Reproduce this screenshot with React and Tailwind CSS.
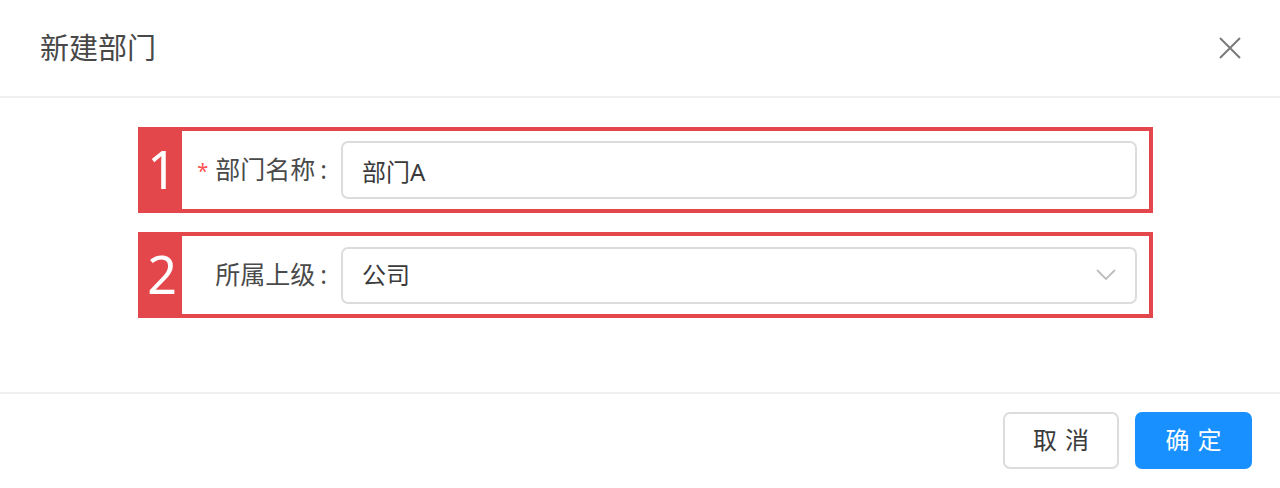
import { useState } from "react";

const font = { fontFamily: '"Noto Sans", "Noto Sans CJK SC", sans-serif' };

function FormRow({ num, required, label, children }) {
    return (
        <div className="ml-[138px] w-[1015px] h-[86px] border-[4px] border-[#e4474b] flex">
            <div className="w-[40px] bg-[#e4474b] flex items-center justify-center text-white text-[52px] leading-none pb-[2px]">
                {num}
            </div>
            <div className="flex-1 flex items-center bg-white">
                <div className="w-[151px] shrink-0 flex items-center justify-end text-[25px] text-[#4a4a4a]">
                    {required && <span className="text-[#ff4d4f] text-[20px] mr-[7px] mt-[2px]">*</span>}
                    <span>{label}</span>
                    <span className="ml-[5px] mr-[6px]">:</span>
                </div>
                <div className="ml-[8px] mr-[12px] flex-1">{children}</div>
            </div>
        </div>
    );
}

export default function App() {
    const [name, setName] = useState('部门A');

    return (
        <div className="w-[1280px] h-[488px] bg-white flex flex-col" style={font}>
            {/* 头部 */}
            <div className="h-[98px] border-b-2 border-[#efefef] flex items-center justify-between pl-[40px] pr-[38px] shrink-0">
                <h1 className="text-[29px] text-[#484848] font-normal">新建部门</h1>
                <svg width="24" height="24" viewBox="0 0 24 24" className="text-[#7a7a7a]">
                    <path d="M2 2 L22 22 M22 2 L2 22" stroke="currentColor" strokeWidth="2" fill="none" />
                </svg>
            </div>

            {/* 表单 */}
            <div className="flex-1 pt-[29px] flex flex-col gap-[19px]">
                <FormRow num="1" required label="部门名称">
                    <input
                        value={name}
                        onChange={(e) => setName(e.target.value)}
                        className="w-full h-[58px] border-2 border-[#dcdcdc] rounded-[7px] px-[19px] text-[24px] text-[#3a3a3a] outline-none"
                        style={font}
                    />
                </FormRow>
                <FormRow num="2" label="所属上级">
                    <div className="w-full h-[57px] border-2 border-[#dcdcdc] rounded-[7px] px-[19px] flex items-center justify-between text-[24px] text-[#3a3a3a]">
                        <span>公司</span>
                        <svg width="20" height="12" viewBox="0 0 20 12" className="text-[#bdbdbd]">
                            <path d="M1 1 L10 10 L19 1" stroke="currentColor" strokeWidth="1.8" fill="none" />
                        </svg>
                    </div>
                </FormRow>
            </div>

            {/* 底部 */}
            <div className="h-[96px] border-t-2 border-[#efefef] flex items-center justify-end gap-[16px] pr-[28px] pb-[2px] shrink-0">
                <button className="w-[116px] h-[57px] border-2 border-[#dcdcdc] rounded-[7px] text-[24px] text-[#3a3a3a] bg-white tracking-[8px] pl-[8px]">
                    取消
                </button>
                <button className="w-[117px] h-[57px] rounded-[7px] text-[24px] text-white bg-[#1890ff] tracking-[8px] pl-[8px]">
                    确定
                </button>
            </div>
        </div>
    );
}
